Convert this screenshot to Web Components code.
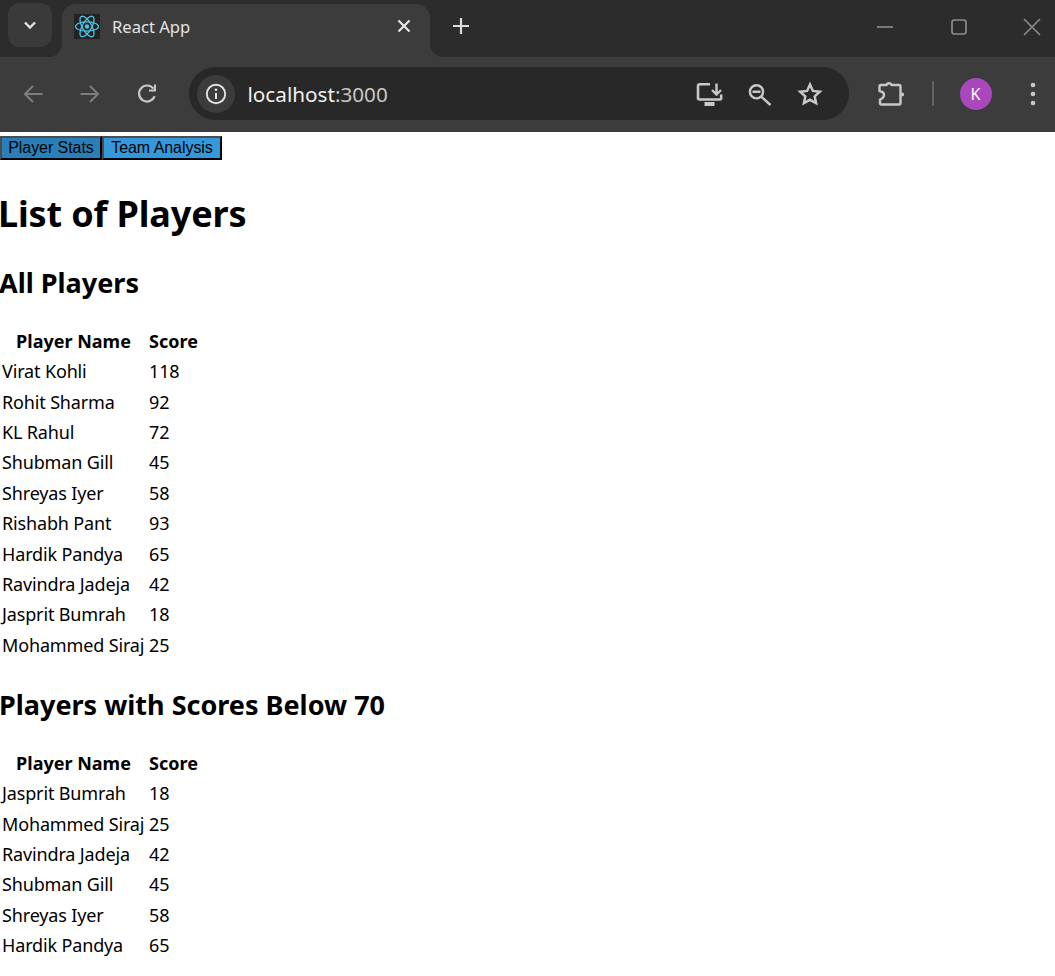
<!DOCTYPE html>
<html><head><meta charset="utf-8">
<style>
html,body{margin:0;padding:0;background:#fff;overflow:hidden;height:976px}
browser-chrome{display:block}
</style></head>
<body>
<browser-chrome></browser-chrome>
<app-nav></app-nav>
<page-title>List of Players</page-title>
<player-table heading="All Players" rows="Virat Kohli:118,Rohit Sharma:92,KL Rahul:72,Shubman Gill:45,Shreyas Iyer:58,Rishabh Pant:93,Hardik Pandya:65,Ravindra Jadeja:42,Jasprit Bumrah:18,Mohammed Siraj:25"></player-table>
<player-table heading="Players with Scores Below 70" rows="Jasprit Bumrah:18,Mohammed Siraj:25,Ravindra Jadeja:42,Shubman Gill:45,Shreyas Iyer:58,Hardik Pandya:65"></player-table>
<script>
const FONT='"Noto Sans","Open Sans",sans-serif';
class BrowserChrome extends HTMLElement{
 constructor(){super();this.attachShadow({mode:'open'}).innerHTML=`
<style>
:host{display:block;font-family:${FONT};color:#e3e3e3}
.strip{height:57px;background:#2c2c2c;display:flex;align-items:flex-end;box-sizing:border-box;position:relative}
.tabsearch{width:44px;height:44px;border-radius:12px;background:#3a3a3a;margin:0 0 10px 8px;display:flex;align-items:center;justify-content:center;flex:none}
.tab{width:368px;height:53px;margin-left:10px;background:#3c3c3c;border-radius:14px 14px 0 0;display:flex;align-items:center;position:relative;flex:none;box-sizing:border-box;padding:0 19px 9px 12px}
.tab::before,.tab::after{content:"";position:absolute;bottom:0;width:14px;height:14px}
.tab::before{left:-14px;background:radial-gradient(circle at 0 0,#2c2c2c 14px,#3c3c3c 14.5px)}
.tab::after{right:-14px;background:radial-gradient(circle at 100% 0,#2c2c2c 14px,#3c3c3c 14.5px)}
.fav{width:26px;height:25px;background:#222;display:flex;align-items:center;justify-content:center;flex:none;border-radius:1px}
.title{font-size:16.6px;margin-left:12px;flex:1;color:#e3e3e3}
.plus{margin-bottom:22px;display:flex}
.win{position:absolute;right:-14px;top:0;display:flex}
.win div{width:73.500px;height:53px;display:flex;align-items:center;justify-content:center}
.bar{height:75px;background:#3c3c3c;display:flex;align-items:center;box-sizing:border-box;padding-bottom:2px}
.nav{display:flex;align-items:center;flex:none}
.nav span{width:56.5px;display:flex;justify-content:center}
.omni{width:660px;height:53px;background:#282828;border-radius:27px;margin-left:14px;display:flex;align-items:center;flex:none;box-sizing:border-box;padding-left:8px}
.info{width:38px;height:38px;border-radius:50%;background:#3c3c3c;display:flex;align-items:center;justify-content:center;flex:none}
.url{font-size:20.7px;margin-left:13px;flex:1;color:#c7c7c7}.url b{font-weight:400;color:#f1f1f1}
.oi{display:flex;align-items:center;gap:0;margin-right:13px}
.oi span{width:50.5px;display:flex;justify-content:center}
.ext{margin-left:28px;display:flex}
.sep{width:2px;height:25px;background:#646464;margin-left:27px;border-radius:1px}
.av{width:32px;height:32px;border-radius:50%;background:#ab47bc;color:#fff;font-size:16px;display:flex;align-items:center;justify-content:center;margin-left:26px;font-family:${FONT}}
.more{margin-left:38px;display:flex}
</style>
<div class="strip">
 <div class="tabsearch"><svg width="16" height="16" viewBox="0 0 16 16"><path d="M3 5.5l5 5 5-5" fill="none" stroke="#e3e3e3" stroke-width="2.4"/></svg></div>
 <div class="tab">
  <div class="fav"><svg width="26" height="25" viewBox="-13 -12.5 26 25" fill="none" stroke="#4fc3e0" stroke-width="1.3"><ellipse rx="11.5" ry="4.6"/><ellipse rx="11.5" ry="4.6" transform="rotate(60)"/><ellipse rx="11.5" ry="4.6" transform="rotate(120)"/><circle r="2.2" fill="#4fc3e0" stroke="none"/></svg></div>
  <div class="title">React App</div>
  <svg width="14" height="14" viewBox="0 0 14 14"><path d="M1.5 1.5l11 11M12.5 1.5l-11 11" stroke="#e8e8e8" stroke-width="2.2"/></svg>
 </div>
 <div class="plus" style="margin-left:22px"><svg width="18" height="18" viewBox="0 0 18 18"><path d="M9 1v16M1 9h16" stroke="#dcdcdc" stroke-width="2.2"/></svg></div>
 <div class="win">
  <div><svg width="16" height="2" viewBox="0 0 16 2"><path d="M0 1h16" stroke="#8c8c8c" stroke-width="1.6"/></svg></div>
  <div><svg width="16" height="16" viewBox="0 0 16 16"><rect x="1" y="1" width="14" height="14" rx="2.4" fill="none" stroke="#8c8c8c" stroke-width="1.7"/></svg></div>
  <div><svg width="18" height="18" viewBox="0 0 18 18"><path d="M1 1l16 16M17 1L1 17" stroke="#8c8c8c" stroke-width="1.6"/></svg></div>
 </div>
</div>
<div class="bar">
 <div class="nav" style="margin-left:5px">
  <span><svg width="20" height="20" viewBox="0 0 20 20" fill="none" stroke="#7e7e7e" stroke-width="2"><path d="M19.5 10H1.5M10 2L2 10l8 8"/></svg></span>
  <span><svg width="20" height="20" viewBox="0 0 20 20" fill="none" stroke="#7e7e7e" stroke-width="2"><path d="M.5 10h18M10 2l8 8-8 8"/></svg></span>
  <span><svg width="22" height="22" viewBox="0 0 22 22" fill="none" stroke="#c8c8c8" stroke-width="2.2"><path d="M19.600 13.200A8 8 0 1 1 18.400 5.600"/><path d="M20 1.500V7.500H14" stroke-width="2"/></svg></span>
 </div>
 <div class="omni">
  <div class="info"><svg width="22" height="22" viewBox="0 0 22 22"><circle cx="11" cy="11" r="9.2" fill="none" stroke="#e3e3e3" stroke-width="1.9"/><path d="M11 10v6" stroke="#e3e3e3" stroke-width="2"/><circle cx="11" cy="6.8" r="1.3" fill="#e3e3e3"/></svg></div>
  <div class="url"><b>localhost</b>:3000</div>
  <div class="oi">
   <span><svg width="32" height="26" viewBox="0 0 32 26" fill="none" stroke="#c8c8c8" stroke-width="2.6"><path d="M17 3.200H6.500A1.500 1.500 0 0 0 5 4.700V17A1.500 1.500 0 0 0 6.500 18.500H26.700A1.500 1.500 0 0 0 28.200 17V13.500"/><path d="M23.500 2.500V13.500M19 9l4.500 4.500L28 9" stroke-width="2.4"/><path d="M11.500 23h10" stroke-width="4"/></svg></span>
   <span><svg width="24" height="24" viewBox="0 0 24 24" fill="none" stroke="#c8c8c8" stroke-width="2.4"><circle cx="8.500" cy="9.800" r="6.600"/><path d="M4.500 9.800h8M13.500 14.800L22.500 23"/></svg></span>
   <span><svg width="26" height="25" viewBox="0 0 26 25" fill="none" stroke="#c8c8c8" stroke-width="2.5" stroke-linejoin="miter"><path d="M13 3.500l2.900 6.400 6.900.8-5.100 4.700 1.400 6.800L13 18.800l-6.100 3.400 1.400-6.800-5.100-4.700 6.900-.8z"/></svg></span>
  </div>
 </div>
 <div class="ext"><svg width="28" height="26" viewBox="0 0 28 26" fill="none" stroke="#c8c8c8" stroke-width="2.400" stroke-linejoin="round"><path d="M2.500 5.500A1.500 1.500 0 0 1 4 4H9.500A2.700 2.700 0 0 1 14.500 4H22A1.500 1.500 0 0 1 23.500 5.500V22A1.500 1.500 0 0 1 22 23.500H4.500A1.500 1.500 0 0 1 3 22V18.500C5.500 17.500 7 16 7 14C7 12 5.500 10.500 2.500 10Z"/><circle cx="25.200" cy="13.500" r="1.900" fill="#c8c8c8" stroke="none"/></svg></div>
 <div class="sep"></div>
 <div class="av">K</div>
 <div class="more"><svg width="6" height="24" viewBox="0 0 6 24" fill="#c8c8c8"><circle cx="3" cy="3" r="2.300"/><circle cx="3" cy="12" r="2.300"/><circle cx="3" cy="21" r="2.300"/></svg></div>
</div>`;}
}
class AppNav extends HTMLElement{
 constructor(){super();this.attachShadow({mode:'open'}).innerHTML=`
<style>
:host{display:flex;padding-top:4px}
button{font:16px "Liberation Sans",Arial,sans-serif;letter-spacing:-.05px;width:102px;height:24px;padding:0;margin:0;border:2px solid;border-color:#4c4c4c #000 #000 #4c4c4c;background:#3498db;color:#000;box-sizing:border-box;text-align:center}
button.h{background:#2980b9}
button+button{width:120px}
</style>
<button class="h">Player Stats</button><button>Team Analysis</button>`;}
}
class PageTitle extends HTMLElement{
 constructor(){super();this.attachShadow({mode:'open'}).innerHTML=`
<style>:host{display:block;font:700 36px/44px ${FONT};margin:32px 0 29px -2px;letter-spacing:-.15px;color:#000}</style><slot></slot>`;}
}
class PlayerTable extends HTMLElement{
 connectedCallback(){
  const rows=this.getAttribute('rows').split(',').map(r=>r.split(':'));
  this.attachShadow({mode:'open'}).innerHTML=`
<style>
:host{display:block;font:18px/26.4px ${FONT};color:#000}
h2{font:700 27px/36px ${FONT};margin:26px 0 23.7px -1px}
table{border-collapse:separate;border-spacing:2px;border:0}
th,td{padding:1px 0}
th{text-align:center;font-weight:700}
td{text-align:left;letter-spacing:-.15px}
th:first-child{width:143px}
td:first-child{white-space:nowrap}
th:last-child,td:last-child{padding-left:2px}
</style>
<h2>${this.getAttribute('heading')}</h2>
<table><thead><tr><th>Player Name</th><th>Score</th></tr></thead>
<tbody>${rows.map(r=>`<tr><td>${r[0]}</td><td>${r[1]}</td></tr>`).join('')}</tbody></table>`;
 }
}
customElements.define('browser-chrome',BrowserChrome);
customElements.define('app-nav',AppNav);
customElements.define('page-title',PageTitle);
customElements.define('player-table',PlayerTable);
</script>
</body></html>
